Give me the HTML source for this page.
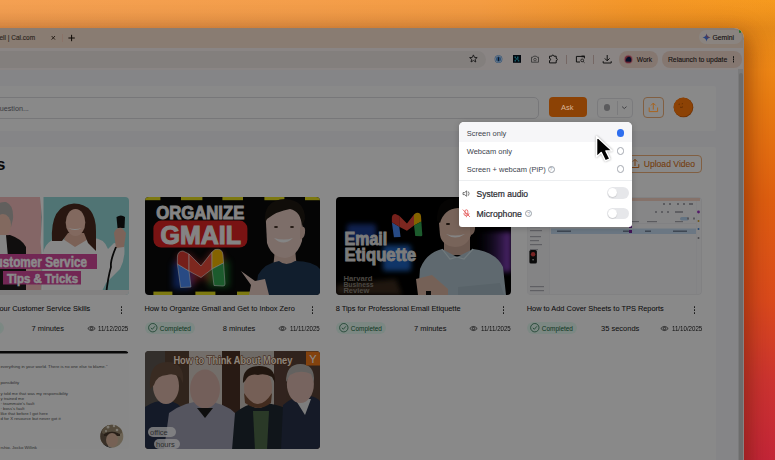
<!DOCTYPE html>
<html><head><meta charset="utf-8">
<style>
*{box-sizing:border-box;margin:0;padding:0}
html,body{width:775px;height:460px;overflow:hidden;font-family:"Liberation Sans",sans-serif}
body{position:relative;background:#e8732a}
.a{position:absolute}
.t{position:absolute;white-space:nowrap;line-height:1}
#wall{left:0;top:0;width:775px;height:460px;
 background:linear-gradient(180deg,#f69a1e 0px,#f08c18 50px,#e87c12 100px,#de5e10 200px,#da4a1c 300px,#cc3430 380px,#c42638 460px)}
#walltop{left:0;top:0;width:775px;height:30px;background:linear-gradient(90deg,#f4a052 0%,#f49e4a 40%,#f49c42 62%,#f39628 82%,rgba(246,149,28,0) 100%)}
#walldark{left:0;top:0;width:775px;height:70px;background:linear-gradient(180deg,rgba(80,40,0,0) 0px,rgba(80,40,0,.02) 10px,rgba(80,40,0,.09) 28px,rgba(80,40,0,0) 70px)}
#walltopsh{left:0;top:14px;width:775px;height:16px;background:linear-gradient(180deg,rgba(120,50,0,0),rgba(120,50,0,.12))}
#win{left:0;top:28px;width:744px;height:432px;border-top-right-radius:10px;overflow:hidden}
#winsh{left:-40px;top:28px;width:784px;height:460px;border-top-right-radius:10px;box-shadow:0 8px 28px 0 rgba(90,30,0,.34),6px 6px 18px 0 rgba(90,30,0,.28)}
#scene{left:0;top:-28px;width:775px;height:460px}
.card{background:#fdfdfe}
#overlay{left:0;top:0;width:744px;height:432px;background:rgba(0,0,0,.46)}
#dd{left:459px;top:122px;width:173px;height:104.6px;background:#fff;border-radius:5px 5px 3px 3px;box-shadow:0 1px 6px rgba(0,0,0,.18);overflow:hidden}
.thumb{position:absolute;overflow:hidden;border-radius:4px;top:197.4px;width:175px;height:98px}
.thumb2{position:absolute;overflow:hidden;border-radius:4px;top:350.5px;width:175px;height:98.5px}
.title{position:absolute;white-space:nowrap;line-height:1;font-size:7.4px;color:#151515;top:305px;-webkit-text-stroke:0.05px #151515}
.kebab{position:absolute;top:306.3px;width:2px}
.kebab i{display:block;width:1.8px;height:1.8px;border-radius:50%;background:#2a2a2a;margin-bottom:1.2px}
.badge{position:absolute;top:321.9px;height:12px;width:49.6px;border-radius:6px;background:#e6fbf2}
.badge .ck{position:absolute;left:2.6px;top:1.3px;width:10px;height:10px}
.badge span{position:absolute;left:14.8px;top:3.8px;font-size:6.45px;color:#14683c;line-height:1;white-space:nowrap}
.dur{position:absolute;top:324.5px;font-size:7.5px;color:#222;line-height:1;white-space:nowrap}
.date{position:absolute;top:326px;font-size:6.9px;color:#222;line-height:1;white-space:nowrap;transform:scaleX(0.89);transform-origin:0 0}
.eye{position:absolute;top:324.5px}

.row{position:absolute;left:0;width:173px;font-size:7.5px;color:#40444e;line-height:1;white-space:nowrap}
.radio{position:absolute;left:157.7px;width:7.6px;height:7.6px;border-radius:50%;border:0.9px solid #a4a8b0}
.tog{position:absolute;left:148px;width:21.5px;height:11.5px;border-radius:6px;background:#e6e7ea}
.tog::after{content:"";position:absolute;left:1.2px;top:1.2px;width:9px;height:9px;border-radius:50%;background:#fff;box-shadow:0 0.5px 1px rgba(0,0,0,.2)}
</style></head><body>
<div id="wall" class="a"></div>
<div id="walltop" class="a"></div><div id="walldark" class="a"></div><div id="winsh" class="a"></div>
<div id="win" class="a"><div id="scene" class="a">
  <!-- tab strip -->
  <div class="a" style="left:0;top:28px;width:744px;height:20px;background:#fde6d2"></div>
  <div class="t" style="left:-0.5px;top:34.6px;font-size:6.5px;color:#4e4036;-webkit-text-stroke:0.1px #4e4036">ell | Cal.com</div>
  <svg class="a" style="left:50px;top:34px" width="8" height="8" viewBox="0 0 8 8"><path d="M1.6 2 L5.0 5.6 M5.0 2 L1.6 5.6" stroke="#3a2a20" stroke-width="0.9"/></svg>
  <div class="a" style="left:62px;top:34px;width:0.8px;height:7.5px;background:#ffd4c0"></div>
  <svg class="a" style="left:66px;top:33px" width="10" height="10" viewBox="0 0 10 10"><path d="M5.6 1.8 V8.2 M2.4 5 H8.8" stroke="#1a1008" stroke-width="1"/></svg>
  <div class="a" style="left:698.5px;top:30px;width:43px;height:14.3px;border-radius:7px;background:#fff4ec"></div>
  <div class="t" style="left:712.5px;top:34.6px;font-size:6.8px;color:#2a2020;-webkit-text-stroke:0.1px #2a2020">Gemini</div>
  <svg class="a" style="left:702px;top:33px" width="9" height="9" viewBox="0 0 9 9"><path d="M4.5 0.5 Q5 4 8.5 4.5 Q5 5 4.5 8.5 Q4 5 0.5 4.5 Q4 4 4.5 0.5Z" fill="#4a7ae8"/><path d="M4.5 0.5 Q5 4 8.5 4.5 L4.5 4.5Z" fill="#e85a4a" opacity=".7"/></svg>
  <div class="a" style="left:738.9px;top:30.2px;width:2.6px;height:2.6px;border-radius:50%;background:#40d050"></div>

  <!-- toolbar -->
  <div class="a" style="left:0;top:47.6px;width:744px;height:22px;background:#fff6f4"></div>
  <div class="a" style="left:0;top:69.6px;width:744px;height:400px;background:#f6f6fa"></div>
  <div class="a" style="left:-20px;top:51px;width:506px;height:16.5px;border-radius:8.5px;background:#f2eae8"></div>
  <svg class="a" style="left:0;top:0" width="775" height="80" viewBox="0 0 775 80">
    <path d="M473.4 54.9 L474.5 57.4 L477.2 57.6 L475.1 59.3 L475.8 62 L473.4 60.5 L471 62 L471.7 59.3 L469.6 57.6 L472.3 57.4Z" fill="none" stroke="#2a2a2a" stroke-width="0.9" stroke-linejoin="round"/>
    <circle cx="498.5" cy="59.1" r="3.9" fill="#5294dc"/>
    <circle cx="498.5" cy="59.1" r="3.1" fill="none" stroke="#e8f2fc" stroke-width="0.8"/>
    <rect x="498" y="57.3" width="1" height="3.6" fill="#1a2a40"/>
    <rect x="513" y="55" width="8" height="7.8" fill="#06101c"/>
    <g fill="#2aa8c0"><rect x="514.5" y="56.5" width="1.5" height="1.5"/><rect x="517" y="56.5" width="1.5" height="1.5"/><rect x="515.5" y="58.2" width="3" height="1.5"/><rect x="514.5" y="60" width="1.5" height="1.5"/><rect x="517.8" y="60" width="1.5" height="1.5"/></g>
    <path d="M531.5 57.2 h1.5 l0.8 -1 h2.4 l0.8 1 h1.5 v5 h-7z" fill="none" stroke="#6a6a6a" stroke-width="0.9" stroke-linejoin="round"/>
    <circle cx="535" cy="59.6" r="1.3" fill="none" stroke="#6a6a6a" stroke-width="0.8"/>
    <path d="M549.5 56.2 h2.2 a1.1 1.1 0 0 1 2.2 0 h2.3 v2.2 a1.1 1.1 0 0 1 0 2.2 v2.3 h-6.7 v-2.3 a1.1 1.1 0 0 0 0 -2.2z" fill="none" stroke="#202020" stroke-width="1" stroke-linejoin="round"/>
    <rect x="566.3" y="55" width="0.7" height="9" fill="#c8a8a0"/>
    <path d="M580 62 h-3.6 v-5.6 h8 v2" fill="none" stroke="#202020" stroke-width="1"/>
    <rect x="581.5" y="55.6" width="3.2" height="1.6" fill="#202020"/>
    <circle cx="582.2" cy="60.4" r="1.4" fill="none" stroke="#202020" stroke-width="0.8"/>
    <path d="M583.2 61.4 l1.3 1.3" stroke="#202020" stroke-width="0.8"/>
    <rect x="593.3" y="55" width="0.7" height="9" fill="#c8a8a0"/>
    <path d="M607.2 55 v5.6 M604.8 58.4 l2.4 2.4 l2.4 -2.4 M603.2 61.2 v1.8 h8 v-1.8" fill="none" stroke="#202020" stroke-width="1"/>
  </svg>
  <div class="a" style="left:619px;top:51px;width:39px;height:16.5px;border-radius:8px;background:#f5ddd0"></div>
  <svg class="a" style="left:623px;top:54px" width="11" height="11" viewBox="0 0 11 11"><circle cx="5.4" cy="5.4" r="4.6" fill="#f4a8b0"/><circle cx="5.4" cy="5.4" r="3.6" fill="#c04860"/><path d="M2.6 7.6 Q2.8 3.2 5.8 2.8 Q8.4 3.2 8.2 6 L8.2 7.8Z" fill="#0c1a48"/></svg>
  <div class="t" style="left:636.8px;top:57.2px;font-size:6.6px;color:#2a2020;-webkit-text-stroke:0.1px #2a2020">Work</div>
  <div class="a" style="left:661.5px;top:51px;width:80px;height:16.5px;border-radius:8px;background:#f5ddd0"></div>
  <div class="t" style="left:667.9px;top:57.2px;font-size:6.85px;color:#2a2020;-webkit-text-stroke:0.1px #2a2020">Relaunch to update</div>
  <div class="a" style="left:732.8px;top:56.4px;width:1.6px;height:1.6px;border-radius:50%;background:#222;box-shadow:0 2.3px 0 #222,0 4.6px 0 #222"></div>

  <!-- header card -->
  <div class="a card" style="left:-2px;top:86px;width:718px;height:45.3px;border-radius:0 2px 2px 0"></div>
  <div class="a" style="left:-10px;top:97px;width:548.5px;height:22px;border:1px solid #dcdce0;border-radius:5px;background:#fdfdfe"></div>
  <div class="t" style="left:-0.3px;top:105.1px;font-size:7.2px;color:#6e6e76">uestion...</div>
  <div class="a" style="left:597px;top:97.5px;width:35.5px;height:20px;border:1px solid #e4e4e8;border-radius:4px"></div>
  <div class="a" style="left:603.5px;top:104.1px;width:6.8px;height:6.8px;border-radius:50%;background:#a8a8ac"></div>
  <div class="a" style="left:616.5px;top:100.5px;width:1px;height:14px;background:#e4e4e8"></div>
  <div class="a" style="left:643px;top:97px;width:21px;height:20.5px;border:1px solid #efb07a;border-radius:4px"></div>

  <!-- content card -->
  <div class="a card" style="left:-2px;top:147px;width:718px;height:330px;border-radius:0 2px 0 0"></div>
  <div class="t" style="left:-50px;top:156px;font-size:17px;font-weight:bold;color:#111">Videos</div>
  <div class="a" style="left:627px;top:155px;width:75px;height:17.5px;border:1px solid #efb07a;border-radius:4px"></div>
  <div class="t" style="left:643.7px;top:160.2px;font-size:8.6px;color:#d87420;-webkit-text-stroke:0.1px #d87420">Upload Video</div>
  <svg class="a" style="left:628px;top:156px" width="14" height="14" viewBox="0 0 14 14"><path d="M3 8.2 v3.3 h7.8 v-3.3 M7 10 v-6.6 M4.8 5.6 l2.2 -2.2 l2.2 2.2" fill="none" stroke="#d87420" stroke-width="1"/></svg>

  <!-- cards row 1 -->
  <div class="thumb" style="left:-46.4px"><svg width="175" height="98" viewBox="0 0 175 98">
    <rect width="175" height="98" fill="#94d6d6"/>
    <rect width="87.4" height="98" fill="#f4bcbc"/>
    <path d="M86 0 L88 20 L86.5 45 L88.5 70 L87 98 L89.5 98 L89.5 0Z" fill="#fff"/>
    <path d="M38 20 Q40 4 52 5 Q60 8 59 22 L57 30 Q50 24 44 28Z" fill="#b4b0ac"/>
    <ellipse cx="49" cy="28" rx="8" ry="11" fill="#f0c3b0"/>
    <path d="M36 98 L37 44 Q44 38 56 38 Q68 42 72 50 L72 98Z" fill="#1e1a1a"/>
    <path d="M40 38 L52 38 L54 60 L46 64 L40 50Z" fill="#f4f4f4"/>
    <path d="M112 30 L131 30 L134 52 L109 52Z" fill="#e4b4a0"/>
    <path d="M89 98 L89 56 Q92 43 106 40 L121 50 L136 41 Q150 40 154 52 L160 46 L170 48 Q172 60 166 72 L152 86 L146 98Z" fill="#fafafa"/>
    <path d="M98 44 Q96 8 120 6.5 Q142 7 142 34 L142 54 L134 46 L130 36 L114 36 L108 44 Z" fill="#4a2a1e"/>
    <ellipse cx="121.5" cy="25.5" rx="9.8" ry="13.5" fill="#f0c3b0"/>
    <path d="M114 31 Q121 35 128 31 Q121 33 114 31Z" fill="#fff"/>
    <path d="M162.5 20 Q167 17 171 20 L170.5 31 L163.5 31Z" fill="#111"/>
    <path d="M160 36 Q162 30 168 31 L172 36 L170 50 L162 51Z" fill="#e8b8a4"/>
    <path d="M162 50 Q156 64 157 70 Q154 80 152 98" fill="none" stroke="#111" stroke-width="1.8"/>
    <rect x="46" y="57" width="97" height="15" fill="#d2489c"/>
    <rect x="49" y="74" width="78" height="13.5" fill="#d2489c"/>
    <text x="33" y="69.5" font-family="Liberation Sans" font-weight="bold" font-size="14.5" fill="#fff" stroke="#fff" stroke-width="0.5" textLength="100" lengthAdjust="spacingAndGlyphs">Customer Service</text>
    <text x="53" y="85.5" font-family="Liberation Sans" font-weight="bold" font-size="13.5" fill="#fff" stroke="#fff" stroke-width="0.5" textLength="71" lengthAdjust="spacingAndGlyphs">Tips &amp; Tricks</text>
    <rect y="93" width="175" height="5" fill="#f0eeee"/>
  </svg></div>
  <div class="thumb" style="left:144.6px"><svg width="175" height="98" viewBox="0 0 175 98">
    <rect width="175" height="98" fill="#0a0a0a"/>
    <g fill="#e8e020"><rect x="0" y="0" width="15.4" height="3.2"/><rect x="36" y="0" width="21.4" height="3.2"/><rect x="77.4" y="0" width="20.6" height="3.2"/><rect x="119.4" y="0" width="20" height="3.2"/><rect x="160" y="0" width="15" height="3.2"/>
    <rect x="8.4" y="94.6" width="19" height="3.4"/><rect x="50.4" y="94.6" width="20" height="3.4"/><rect x="92" y="94.6" width="14" height="3.4"/></g>
    <text x="11.3" y="21.5" font-family="Liberation Sans" font-weight="bold" font-size="18" fill="#f4f4f4" stroke="#f4f4f4" stroke-width="0.9" textLength="88" lengthAdjust="spacingAndGlyphs">ORGANIZE</text>
    <rect x="8.4" y="23.6" width="94" height="27" rx="8" fill="#e02424"/>
    <text x="15.5" y="46.6" font-family="Liberation Sans" font-weight="bold" font-size="26" fill="#f4f4f4" stroke="#f4f4f4" stroke-width="1.1" textLength="80.5" lengthAdjust="spacingAndGlyphs">GMAIL</text>
    <defs><filter id="glow" x="-50%" y="-50%" width="200%" height="200%"><feGaussianBlur stdDeviation="3"/></filter></defs>
    <g filter="url(#glow)" opacity="0.55"><path d="M32 58 L44 56 L56 68 L67 54 L78 56 L80 88 L68 88 L56 80 L46 90 L35 90Z" fill="#ff4040"/><rect x="28" y="66" width="18" height="26" fill="#2060ff"/><rect x="64" y="64" width="20" height="26" fill="#20c040"/></g>
    <path d="M32.4 67 L44 74 L46 90 L35.6 90.5Z" fill="#4a8af4" stroke="#f0f0f0" stroke-width="0.6"/>
    <path d="M32.4 60 Q32.6 54 38 54 L44 57 L44 74 L32.4 67Z" fill="#d83a30" stroke="#f0f0f0" stroke-width="0.6"/>
    <path d="M44 57 L56 69 L67 55 L67 72 L56 80.5 L44 74Z" fill="#e84a3a" stroke="#f0f0f0" stroke-width="0.6"/>
    <path d="M67 55 L70 52.5 Q77.5 51 78 58 L78.5 66 L67 72Z" fill="#f4b800" stroke="#f0f0f0" stroke-width="0.6"/>
    <path d="M67 72 L78.5 66 L80 87 Q80 89 78 89 L69 88.5Z" fill="#34a853" stroke="#f0f0f0" stroke-width="0.6"/>
    <path d="M130 52 L150 52 L152 72 L128 72Z" fill="#dcbcb0"/>
    <path d="M110 98 L113 78 Q120 66 134 64 Q141 70 150 64 Q168 64 175 72 L175 98Z" fill="#213853"/>
    <path d="M121 26 Q120 6 140 5 Q158 6 158 24 L157 44 Q152 60 140 61 Q126 60 122 46Z" fill="#e8ccc2"/>
    <path d="M155 30 Q161 28 160 36 Q159 42 155 42Z" fill="#dcbcb0"/>
    <path d="M120 26 Q118 3 140 2 Q160 3 160 22 L157 30 Q156 14 145 12 Q132 14 122 22Z" fill="#1e1812"/>
    <path d="M129 41 Q138 50 148 41 Q139 44 129 41Z" fill="#f4f4f4"/>
    <g fill="#3a2820"><ellipse cx="131" cy="30" rx="2" ry="1"/><ellipse cx="147" cy="30" rx="2" ry="1"/></g>
    <path d="M96 74 L110 84 L120 82 L124 98 L104 98 L106 88Z" fill="#e8ccc2"/>
  </svg></div>
  <div class="thumb" style="left:335.6px"><svg width="175" height="98" viewBox="0 0 175 98">
    <defs><filter id="bl" x="-50%" y="-50%" width="200%" height="200%"><feGaussianBlur stdDeviation="2.5"/></filter>
    <linearGradient id="pg" x1="0" x2="1"><stop offset="0" stop-color="#101430" stop-opacity="0"/><stop offset="1" stop-color="#9a48d8"/></linearGradient></defs>
    <rect width="175" height="98" fill="#000"/>
    <rect x="140" y="35" width="35" height="40" fill="url(#pg)" filter="url(#bl)"/>
    <defs><filter id="bl2" x="-50%" y="-50%" width="200%" height="200%"><feGaussianBlur stdDeviation="1.2"/></filter></defs>
    <g filter="url(#bl)">
     <rect x="11" y="27" width="29" height="18" rx="3" fill="#1a3c90"/>
     <rect x="47" y="48" width="28" height="26" rx="3" fill="#1a62c0"/>
    </g>
    <path d="M0 88 L60 82 L66 98 L0 98Z" fill="#3a2a1c" filter="url(#bl)"/>
    <g filter="url(#bl2)" transform="translate(55.6 15.6) scale(0.64) translate(-32 -52)">
     <path d="M32.4 67 L44 74 L46 90 L35.6 90.5Z" fill="#4a8af4"/>
     <path d="M32.4 60 Q32.6 54 38 54 L44 57 L44 74 L32.4 67Z" fill="#d83a30"/>
     <path d="M44 57 L56 69 L67 55 L67 72 L56 80.5 L44 74Z" fill="#e84a3a"/>
     <path d="M67 55 L70 52.5 Q77.5 51 78 58 L78.5 66 L67 72Z" fill="#f4b800"/>
     <path d="M67 72 L78.5 66 L80 87 Q80 89 78 89 L69 88.5Z" fill="#34a853"/>
    </g>
    <text x="8.6" y="47.6" font-family="Liberation Sans" font-weight="bold" font-size="17.5" fill="#e4e4e4" stroke="#e4e4e4" stroke-width="0.9" textLength="42.5" lengthAdjust="spacingAndGlyphs">Email</text>
    <text x="8.6" y="63.9" font-family="Liberation Sans" font-weight="bold" font-size="17.5" fill="#e4e4e4" stroke="#e4e4e4" stroke-width="0.9" textLength="71.5" lengthAdjust="spacingAndGlyphs">Etiquette</text>
    <g font-family="Liberation Sans" font-weight="bold" font-size="6.4" fill="#8a847c"><text x="7.4" y="84" textLength="29" lengthAdjust="spacingAndGlyphs">Harvard</text><text x="7.4" y="90" textLength="30" lengthAdjust="spacingAndGlyphs">Business</text><text x="7.4" y="96" textLength="26" lengthAdjust="spacingAndGlyphs">Review</text></g>
    <path d="M108 40 L134 40 L134 58 L108 58Z" fill="#c8a494"/>
    <path d="M82 98 L84 72 Q90 56 106 52 L121 60 L137 52 Q160 55 167 70 L170 98Z" fill="#b0c3cd"/>
    <path d="M106 52 L114 62 L121 60 L128 62 L137 52" fill="none" stroke="#d0e0e6" stroke-width="1.2"/>
    <path d="M103 26 Q102 6 120 6 Q137 7 136 26 L135 38 Q131 50 119 50 Q106 49 104 38Z" fill="#deb9a7"/>
    <path d="M134 26 Q140 24 139 32 Q138 38 134 38Z" fill="#c8a494"/>
    <path d="M101 24 Q100 1 121 1 Q141 2 139 22 L136 28 Q134 12 122 11 Q108 12 104 26Z" fill="#0a0806"/>
    <path d="M110 37 Q119 44 129 37 Q119 40 110 37Z" fill="#f4f4f4"/>
    <g fill="#2a1a10"><ellipse cx="112" cy="27" rx="2.2" ry="0.9"/><ellipse cx="127" cy="27" rx="2.2" ry="0.9"/></g>
    <path d="M80 82 L96 78 L112 92 L112 98 L82 98Z" fill="#d8b4a2"/>
    <path d="M122 90 L164 86 L168 98 L122 98Z" fill="#a4b8c2"/>
    <rect x="90" y="94" width="5" height="4" fill="#111"/>
  </svg></div>
  <div class="thumb" style="left:526.6px"><svg width="175" height="98" viewBox="0 0 175 98">
    <rect width="175" height="98" fill="#f8f8fa"/>
    <rect x="0.3" y="0.3" width="174.4" height="97.4" rx="3.5" fill="none" stroke="#e4e4e8" stroke-width="0.6"/>
    <rect x="1" y="1" width="172" height="3" fill="#f6d2c4"/>
    <g fill="#a8a8b0"><rect x="136" y="6" width="2" height="2"/><rect x="142" y="6" width="2" height="2"/><rect x="150" y="6" width="2" height="2"/><rect x="156" y="6" width="2" height="2"/><rect x="162" y="6" width="4" height="2"/></g>
    <g fill="#b0b0b8"><rect x="128" y="14" width="2" height="2"/><rect x="134" y="14" width="2" height="2"/><rect x="140" y="14" width="2" height="2"/><rect x="148" y="14" width="8" height="2"/></g>
    <rect x="153" y="20" width="9" height="3.5" rx="1.7" fill="#b8d4f0"/>
    <g fill="#a0a0a8"><rect x="160" y="20.5" width="2" height="2"/><rect x="166" y="20.5" width="2" height="2"/></g>
    <circle cx="171.5" cy="15" r="1.4" fill="#9a30c0"/>
    <circle cx="171.5" cy="24" r="1" fill="#d0a030"/>
    <circle cx="171.5" cy="32" r="1" fill="#4080d0"/>
    <circle cx="171.5" cy="41" r="1" fill="#8a8a90"/>
    <rect x="169" y="4" width="0.5" height="93" fill="#ececf0"/>
    <rect x="0.5" y="4" width="22" height="93" fill="#f4f4f6"/>
    <rect x="22.5" y="4" width="0.5" height="93" fill="#e8e8ec"/>
    <rect x="24" y="26" width="145" height="0.5" fill="#e6e6ea"/>
    <g fill="#a8a8b0"><rect x="30" y="24" width="12" height="1.2"/><rect x="98" y="24" width="14" height="1.2"/><rect x="120" y="24" width="10" height="1.2"/><rect x="148" y="24" width="8" height="1.2"/></g>
    <rect x="24" y="31.5" width="145" height="5.5" fill="#c6dcf2"/>
    <g fill="#6a7a90"><rect x="30" y="33.5" width="14" height="1.4"/><rect x="96" y="33.5" width="6" height="1.4"/><rect x="118" y="33.5" width="6" height="1.4"/><rect x="146" y="33.5" width="14" height="1.4"/></g>
    <rect x="102" y="33" width="3" height="3" fill="#7a2aa0"/>
    <rect x="102" y="28.5" width="3" height="2.5" fill="#7a2aa0"/>
    <g fill="#b0b0b8"><rect x="3" y="29" width="10" height="1.2"/><rect x="3" y="33" width="12" height="1.2"/><rect x="3" y="39" width="11" height="1.2"/><rect x="3" y="43" width="9" height="1.2"/><rect x="3" y="47" width="12" height="1.2"/><rect x="3" y="52" width="8" height="1.2"/><rect x="3" y="89" width="14" height="1.2"/><rect x="3" y="93" width="14" height="1.2"/></g>
    <rect x="2.4" y="53" width="7.5" height="13.5" rx="1.6" fill="#141414"/>
    <circle cx="6.1" cy="57.2" r="2.2" fill="#e04444"/>
    <circle cx="6.1" cy="62.8" r="0.8" fill="#ddd"/>
  </svg></div>

  <div class="title" style="left:-0.5px">our Customer Service Skills</div>
  <div class="title" style="left:144.4px">How to Organize Gmail and Get to Inbox Zero</div>
  <div class="title" style="left:335.7px">8 Tips for Professional Email Etiquette</div>
  <div class="title" style="left:526.7px">How to Add Cover Sheets to TPS Reports</div>
  <div class="kebab" style="left:120.5px"><i></i><i></i><i></i></div>
  <div class="kebab" style="left:311.5px"><i></i><i></i><i></i></div>
  <div class="kebab" style="left:502.5px"><i></i><i></i><i></i></div>
  <div class="kebab" style="left:693.5px"><i></i><i></i><i></i></div>

  <div class="badge" style="left:-46px"><svg class="ck" viewBox="0 0 10 10"><circle cx="4.8" cy="4.7" r="4.2" fill="none" stroke="#1e6a44" stroke-width="0.75"/><path d="M2.9 4.8 l1.4 1.5 l2.6 -3" fill="none" stroke="#1e6a44" stroke-width="0.75"/></svg><span>Completed</span></div>
  <div class="badge" style="left:145px"><svg class="ck" viewBox="0 0 10 10"><circle cx="4.8" cy="4.7" r="4.2" fill="none" stroke="#1e6a44" stroke-width="0.75"/><path d="M2.9 4.8 l1.4 1.5 l2.6 -3" fill="none" stroke="#1e6a44" stroke-width="0.75"/></svg><span>Completed</span></div>
  <div class="badge" style="left:336px"><svg class="ck" viewBox="0 0 10 10"><circle cx="4.8" cy="4.7" r="4.2" fill="none" stroke="#1e6a44" stroke-width="0.75"/><path d="M2.9 4.8 l1.4 1.5 l2.6 -3" fill="none" stroke="#1e6a44" stroke-width="0.75"/></svg><span>Completed</span></div>
  <div class="badge" style="left:527px"><svg class="ck" viewBox="0 0 10 10"><circle cx="4.8" cy="4.7" r="4.2" fill="none" stroke="#1e6a44" stroke-width="0.75"/><path d="M2.9 4.8 l1.4 1.5 l2.6 -3" fill="none" stroke="#1e6a44" stroke-width="0.75"/></svg><span>Completed</span></div>
  <div class="dur" style="left:31.5px">7 minutes</div>
  <div class="dur" style="left:222.8px">8 minutes</div>
  <div class="dur" style="left:414px">7 minutes</div>
  <div class="dur" style="left:601px">35 seconds</div>
  <svg class="eye" style="left:86.5px" width="9" height="7" viewBox="0 0 9 7"><path d="M0.8 3.5 Q4.5 -0.6 8.2 3.5 Q4.5 7.6 0.8 3.5Z" fill="none" stroke="#2a2a2a" stroke-width="0.75"/><circle cx="4.5" cy="3.5" r="1.2" fill="none" stroke="#2a2a2a" stroke-width="0.75"/></svg><div class="date" style="left:98px">11/12/2025</div>
  <svg class="eye" style="left:278.0px" width="9" height="7" viewBox="0 0 9 7"><path d="M0.8 3.5 Q4.5 -0.6 8.2 3.5 Q4.5 7.6 0.8 3.5Z" fill="none" stroke="#2a2a2a" stroke-width="0.75"/><circle cx="4.5" cy="3.5" r="1.2" fill="none" stroke="#2a2a2a" stroke-width="0.75"/></svg><div class="date" style="left:289.5px">11/11/2025</div>
  <svg class="eye" style="left:469.0px" width="9" height="7" viewBox="0 0 9 7"><path d="M0.8 3.5 Q4.5 -0.6 8.2 3.5 Q4.5 7.6 0.8 3.5Z" fill="none" stroke="#2a2a2a" stroke-width="0.75"/><circle cx="4.5" cy="3.5" r="1.2" fill="none" stroke="#2a2a2a" stroke-width="0.75"/></svg><div class="date" style="left:480.5px">11/11/2025</div>
  <svg class="eye" style="left:660.0px" width="9" height="7" viewBox="0 0 9 7"><path d="M0.8 3.5 Q4.5 -0.6 8.2 3.5 Q4.5 7.6 0.8 3.5Z" fill="none" stroke="#2a2a2a" stroke-width="0.75"/><circle cx="4.5" cy="3.5" r="1.2" fill="none" stroke="#2a2a2a" stroke-width="0.75"/></svg><div class="date" style="left:671.5px">11/10/2025</div>

  <!-- row 2 -->
  <div class="thumb2" style="left:-46.4px;background:#fcfcfc"><svg width="175" height="99" viewBox="0 0 175 99">
    <rect x="0" y="0" width="174" height="2.6" rx="1.3" fill="#111"/>
    <g font-family="Liberation Sans" font-size="4.3" fill="#555">
     <text x="46.4" y="17.2">everything in your world. There is no one else to blame."</text>
     <text x="46.4" y="33.2">ponsibility</text>
     <text x="46.4" y="44.2">y told me that was my responsibility</text>
     <text x="46.4" y="49.2">y trained me</text>
     <text x="46.4" y="54.2">· teammate's fault</text>
     <text x="46.4" y="59.2">· boss's fault</text>
     <text x="46.4" y="64.2">like that before I got here</text>
     <text x="46.4" y="69.2">d for X resource but never got it</text>
     <text x="46.4" y="98.2">rship, Jocko Willink</text>
    </g>
    <defs><clipPath id="av"><circle cx="157.8" cy="85.2" r="11.5"/></clipPath></defs>
    <g clip-path="url(#av)">
    <rect x="146" y="73" width="24" height="24" fill="#c8b89c"/>
    <rect x="146" y="73" width="8" height="24" fill="#6a5a48"/>
    <path d="M148 82 Q148 72 158 72 Q168 72 168 82 L166 83 Q158 78 150 83Z" fill="#9a8a70"/>
    <g fill="#e8e0d0"><circle cx="154" cy="76" r="1.5"/><circle cx="160" cy="75" r="1.2"/><circle cx="163" cy="79" r="1.3"/><circle cx="152" cy="80" r="1"/></g>
    <path d="M150 83 Q158 78 166 83 L166 85 L150 85Z" fill="#4a3a2c"/>
    <ellipse cx="158" cy="89" rx="6" ry="7" fill="#dab49c"/>
    <path d="M146 97 L147 92 Q152 95 158 97 L170 97Z" fill="#283048"/>
    </g>
  </svg></div>
  <div class="thumb2" style="left:144.6px"><svg width="175" height="99" viewBox="0 0 175 99">
    <rect width="175" height="99" fill="#6a5448"/>
    <rect x="0" y="0" width="20" height="99" fill="#5e5852"/>
    <rect x="20" y="0" width="24" height="99" fill="#5a4434"/>
    <rect x="44" y="0" width="33" height="99" fill="#d4ccc4"/>
    <rect x="77" y="0" width="18" height="99" fill="#4a3026"/>
    <rect x="95" y="0" width="34" height="99" fill="#ccc4bc"/>
    <rect x="129" y="0" width="12" height="99" fill="#5c4238"/>
    <rect x="141" y="0" width="34" height="99" fill="#5a4236"/>
    <path d="M0 99 L0 56 Q12 48 26 50 Q38 54 42 66 L42 99Z" fill="#26304a"/>
    <ellipse cx="21" cy="35" rx="13" ry="18" fill="#dcb8aa"/>
    <path d="M5 38 Q3 11 22 11 Q40 11 38 32 L35 26 Q28 22 22 24 Q12 24 9 34Z" fill="#6a5040"/>
    <path d="M19 99 L24 62 Q40 50 60 50 Q80 52 90 62 L92 99Z" fill="#9d9db0"/>
    <ellipse cx="60" cy="38" rx="15" ry="19.5" fill="#d5b0a7"/>
    <path d="M52 57 L68 57 L60 67Z" fill="#1a1a1a"/>
    <path d="M87 99 L90 62 Q104 50 120 52 Q142 54 152 66 L153 99Z" fill="#1e2830"/>
    <path d="M108 60 L124 60 L122 99 L110 99Z" fill="#4e6a48"/>
    <ellipse cx="113" cy="37" rx="14" ry="20" fill="#d8b0a0"/>
    <path d="M99 42 Q113 64 127 42 L126 52 Q113 62 100 52Z" fill="#7a5038"/>
    <path d="M98 32 Q97 15 114 15 Q131 15 130 32 L127 26 Q120 22 113 24 Q104 22 100 30Z" fill="#3e2a1c"/>
    <path d="M136 99 L138 54 Q150 44 162 44 Q172 46 175 50 L175 99Z" fill="#283048"/>
    <path d="M150 48 L166 48 L160 64Z" fill="#e8e8e8"/>
    <ellipse cx="155.4" cy="33" rx="13.5" ry="19" fill="#dcbab0"/>
    <path d="M141 31 Q141 13 155.4 13 Q170 13 169 31 L166 23 Q155 18 145 24Z" fill="#b8b4b0"/>
    <rect x="161" y="0.5" width="14" height="14" fill="#f27a1a"/>
    <text x="164.2" y="11.5" font-family="Liberation Sans" font-size="11" fill="#fff">Y</text>
    <text x="28.4" y="12.6" font-family="Liberation Sans" font-weight="bold" font-size="11.5" fill="#fff4e4" stroke="#6a3418" stroke-width="1.2" paint-order="stroke" textLength="119" lengthAdjust="spacingAndGlyphs">How to Think About Money</text>
    <g fill="#fff" fill-opacity="0.8"><rect x="3" y="76" width="28" height="10" rx="5"/><rect x="9" y="88" width="26" height="10" rx="5"/></g>
    <g font-family="Liberation Sans" font-size="7.5" fill="#555"><text x="5" y="83.5">office</text><text x="11" y="95.5">hours</text></g>
  </svg></div>
  <!-- scrollbar -->
  <div class="a" style="left:738px;top:69px;width:6px;height:400px;background:#e2e2e4"></div>
  <div class="a" style="left:738.8px;top:72.5px;width:4.4px;height:400px;border-radius:2.2px;background:#cacaca"></div><div class="a" style="left:743.2px;top:40px;width:0.8px;height:420px;background:#fff0ee"></div>
</div>
  <div id="overlay" class="a"></div>
</div>

<div class="a" style="left:548.5px;top:97.2px;width:38.5px;height:20px;border-radius:4px;background:#8c4205"></div>
<div class="t" style="left:561px;top:103.6px;font-size:7.5px;color:#d8b498">Ask</div>
<svg class="a" style="left:672px;top:96px" width="24" height="24" viewBox="0 0 24 24"><circle cx="11.5" cy="11.5" r="9.8" fill="#703204"/><circle cx="11.1" cy="11.1" r="9.5" fill="#8c4205"/><path d="M6.6 8.4 q0.7 -0.5 1.4 0" fill="none" stroke="#4a2000" stroke-width="0.6"/><path d="M9.8 7.9 q0.6 -0.4 1.2 0" fill="none" stroke="#4a2000" stroke-width="0.6"/><path d="M8 11.2 q1.6 0.6 3 -0.4" fill="none" stroke="#4a2000" stroke-width="0.6"/></svg>
<svg class="a" style="left:597px;top:97px" width="100" height="22" viewBox="0 0 100 22"><path d="M25.1 9.6 l2.2 2 l2.2 -2" fill="none" stroke="#38383c" stroke-width="0.9"/>
<path d="M52.2 10.5 v4.1 h8.4 v-4.1 M56.3 12.6 v-6.4 M54 8.4 l2.3 -2.3 l2.3 2.3" fill="none" stroke="#a8641e" stroke-width="1"/></svg>
<div id="dd" class="a">
  <div class="a" style="left:0;top:0;width:173px;height:19.5px;background:#f6f6f8"></div>
  <div class="row" style="top:8.2px;left:7.7px">Screen only</div>
  <div class="row" style="top:26.4px;left:7.7px">Webcam only</div>
  <div class="row" style="top:44.3px;left:7.7px">Screen + webcam (PiP)</div>
  <div class="a" style="left:157.7px;top:7.3px;width:7.6px;height:7.6px;border-radius:50%;background:#2f6fef"></div>
  <div class="radio" style="top:25.2px"></div>
  <div class="radio" style="top:43.4px"></div>
  <div class="a" style="left:0;top:58px;width:173px;height:0.6px;background:#eceef0"></div>
  <div class="t" style="left:17.5px;top:67.5px;font-size:8.5px;color:#2a2a30;-webkit-text-stroke:0.2px #2a2a30">System audio</div>
  <div class="t" style="left:17.5px;top:88px;font-size:8.7px;color:#2a2a30;-webkit-text-stroke:0.2px #2a2a30">Microphone</div>
  <div class="tog" style="top:65.3px"></div>
  <div class="tog" style="top:85.5px"></div>
  <div class="a" style="left:88.5px;top:43.8px;width:7px;height:7px;border-radius:50%;border:0.8px solid #9aa0a8"></div>
  <div class="t" style="left:90.6px;top:45.2px;font-size:5px;color:#9aa0a8">?</div>
  <div class="a" style="left:66.2px;top:88.2px;width:7px;height:7px;border-radius:50%;border:0.8px solid #9aa0a8"></div>
  <div class="t" style="left:68.3px;top:89.6px;font-size:5px;color:#9aa0a8">?</div>
  <svg class="a" style="left:2.5px;top:68.2px" width="10" height="8" viewBox="0 0 10 8"><path d="M1 2.6 h1.5 L4.7 0.9 v5.4 L2.5 4.6 H1z" fill="none" stroke="#4a4a4a" stroke-width="0.75" stroke-linejoin="round"/><path d="M6.4 1.6 q1.3 2 0 4" fill="none" stroke="#4a4a4a" stroke-width="0.75"/></svg>
  <svg class="a" style="left:3px;top:87px" width="9" height="9" viewBox="0 0 9 9"><rect x="3" y="0.8" width="2.8" height="4.4" rx="1.4" fill="none" stroke="#e04848" stroke-width="0.75"/><path d="M1.8 4.2 q0 2.6 2.6 2.6 q2.6 0 2.6 -2.6 M4.4 6.8 v1.4 M0.8 0.6 l7.2 7.4" fill="none" stroke="#e04848" stroke-width="0.75"/></svg>
</div>
<svg class="a" style="left:590px;top:130px" width="28" height="36" viewBox="0 0 28 36"><path d="M6.6 6.5 L6.6 26.8 L11.2 22.4 L15.3 30.8 L19.9 28.9 L15.9 20.9 L22 20.8 Z" fill="#000" stroke="#fff" stroke-width="1.4" stroke-linejoin="round" style="filter:drop-shadow(0 0.6px 0.8px rgba(0,0,0,.35))"/></svg>
</body></html>
